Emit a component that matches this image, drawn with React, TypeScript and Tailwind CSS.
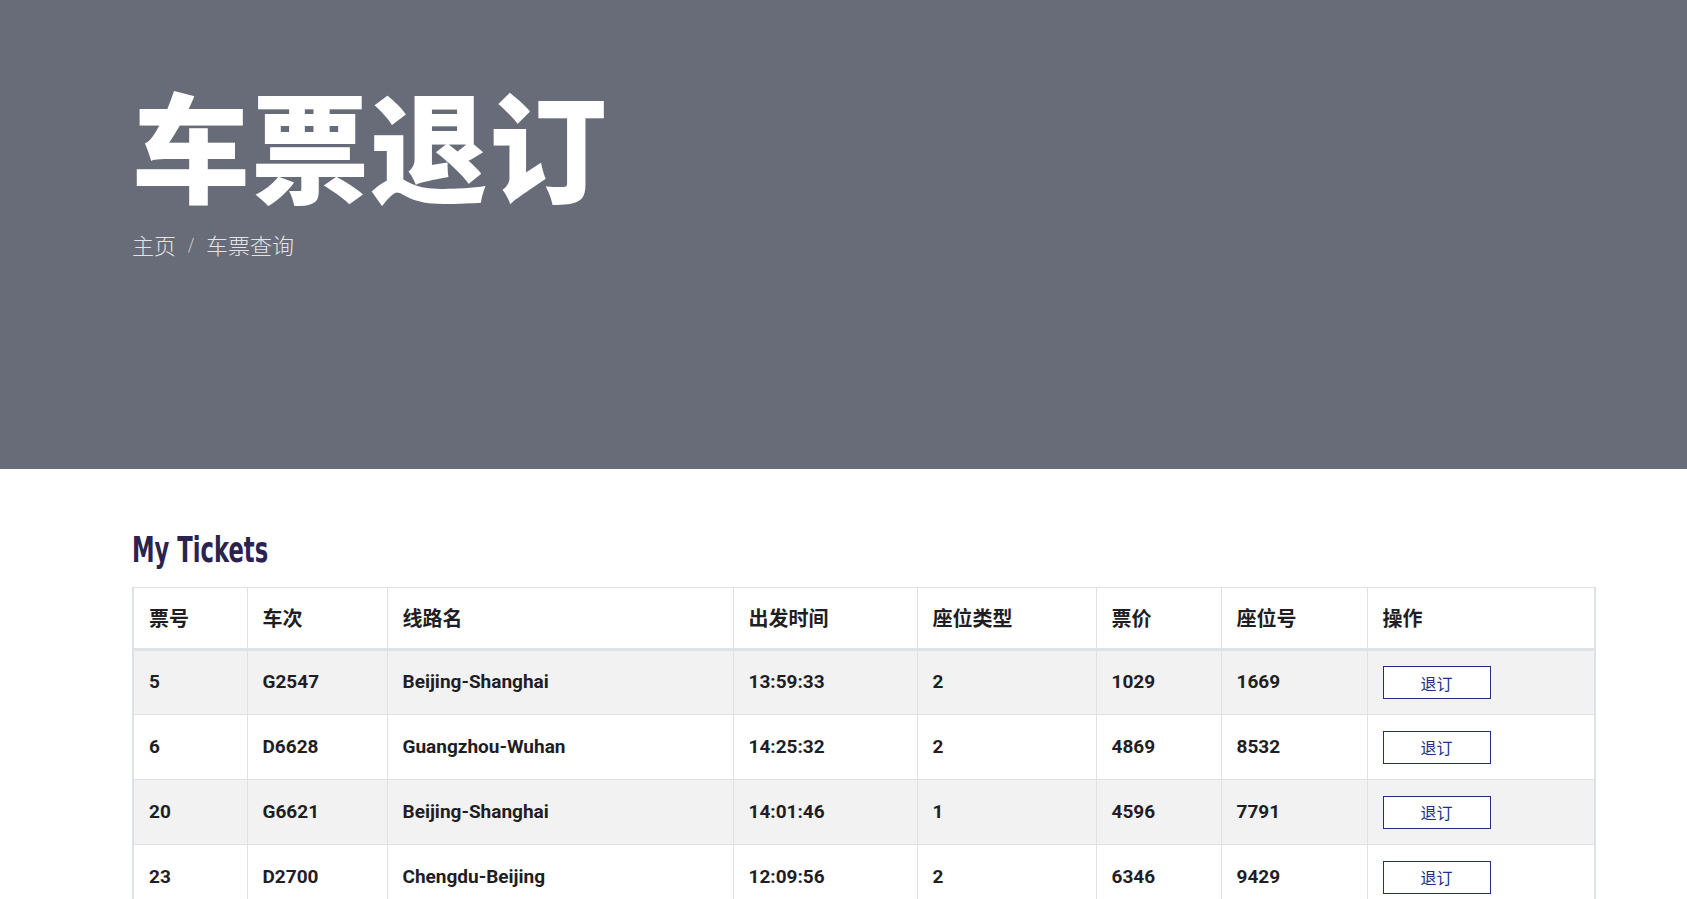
const tickets = [
  { id: 5, train: "G2547", route: "Beijing-Shanghai", time: "13:59:33", seatType: 2, price: 1029, seat: 1669 },
  { id: 6, train: "D6628", route: "Guangzhou-Wuhan", time: "14:25:32", seatType: 2, price: 4869, seat: 8532 },
  { id: 20, train: "G6621", route: "Beijing-Shanghai", time: "14:01:46", seatType: 1, price: 4596, seat: 7791 },
  { id: 23, train: "D2700", route: "Chengdu-Beijing", time: "12:09:56", seatType: 2, price: 6346, seat: 9429 },
];

const cols = [
  { label: "票号", w: "w-[114px]" },
  { label: "车次", w: "w-[140px]" },
  { label: "线路名", w: "w-[346px]" },
  { label: "出发时间", w: "w-[184px]" },
  { label: "座位类型", w: "w-[179px]" },
  { label: "票价", w: "w-[125px]" },
  { label: "座位号", w: "w-[146px]" },
  { label: "操作", w: "" },
];

const cell = "border border-[#dee2e6] px-[15px] text-left align-middle";

export default function App() {
  return (
    <div className="min-h-screen bg-white font-['Roboto','Noto_Sans_CJK_SC',sans-serif]">
      <section className="h-[469px] bg-[#686c78] pl-[132px] pt-[78px]">
        <h1 className="font-['Noto_Sans_CJK_SC',sans-serif] text-[118px] font-black leading-[1.1] tracking-[1px] text-white">
          车票退订
        </h1>
        <nav className="mt-[20px] flex items-center gap-[12px] font-['Noto_Sans_CJK_SC',sans-serif] text-[22px] font-light text-[#e3e3e6]">
          <span>主页</span>
          <span className="text-[15px]">/</span>
          <span>车票查询</span>
        </nav>
      </section>

      <main className="pl-[132px] pr-[91px] pt-[58px]">
        <h2 className="mb-[14px] origin-left scale-x-[0.63] font-['DejaVu_Sans',sans-serif] text-[36px] font-bold leading-[46px] text-[#2b2250]">
          My Tickets
        </h2>
        <table className="w-full border-collapse border-x-2 border-[#dee2e6] text-[19px] font-bold text-[#1e1e24]">
          <thead>
            <tr className="h-[62px] bg-white">
              {cols.map((c) => (
                <th key={c.label} className={`${cell} ${c.w} border-b-[3px] font-['Noto_Sans_CJK_SC',sans-serif] text-[20px] font-bold`}>
                  {c.label}
                </th>
              ))}
            </tr>
          </thead>
          <tbody>
            {tickets.map((t, i) => (
              <tr key={t.id} className={`h-[65px] ${i % 2 === 0 ? "bg-[#f2f2f2]" : "bg-white"}`}>
                <td className={cell}>{t.id}</td>
                <td className={cell}>{t.train}</td>
                <td className={cell}>{t.route}</td>
                <td className={cell}>{t.time}</td>
                <td className={cell}>{t.seatType}</td>
                <td className={cell}>{t.price}</td>
                <td className={cell}>{t.seat}</td>
                <td className={cell}>
                  <button className="flex h-[33px] w-[108px] items-center justify-center border border-[#1f2f86] bg-white font-['Noto_Sans_CJK_SC',sans-serif] text-[16px] font-normal text-[#1f2f86]">
                    退订
                  </button>
                </td>
              </tr>
            ))}
          </tbody>
        </table>
      </main>
    </div>
  );
}
